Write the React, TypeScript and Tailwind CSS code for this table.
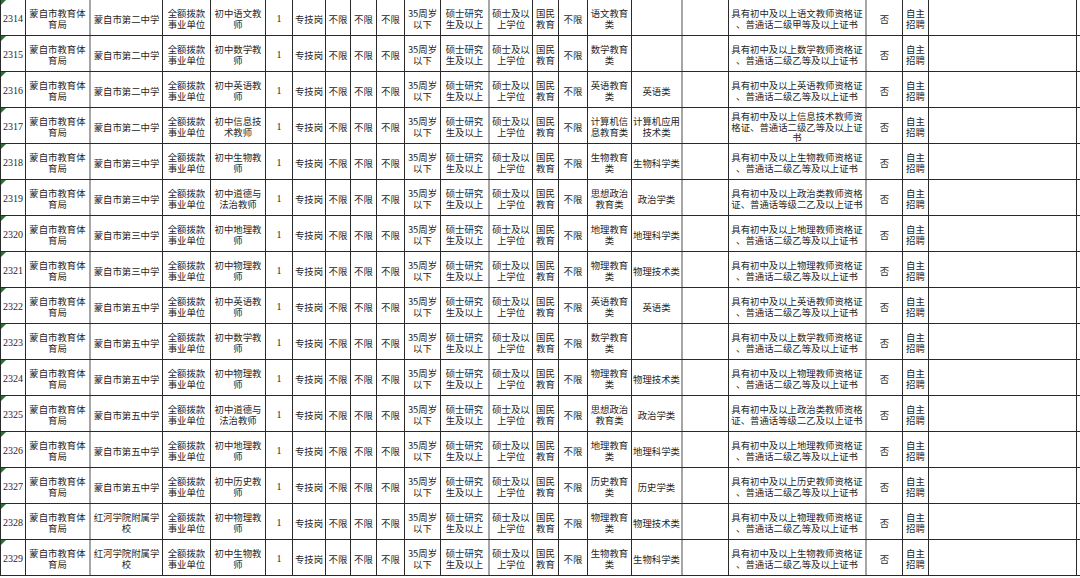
import * as React from "react"

type Row = {
  id: string
  school: string
  post: string
  major: string
  major2: string
  cert: string
}

const schoolOf = (n: number) =>
  n === 2 ? "蒙自市第二中学" : n === 3 ? "蒙自市第三中学" : n === 5 ? "蒙自市第五中学" : "红河学院附属学\n校"

const cert = (subject: string, level = "二级乙等") =>
  `具有初中及以上${subject}教师资格证\n、普通话${level}及以上证书`

const rows: Row[] = [
  { id: "2314", school: schoolOf(2), post: "初中语文教\n师", major: "语文教育\n类", major2: "", cert: cert("语文", "二级甲等") },
  { id: "2315", school: schoolOf(2), post: "初中数学教\n师", major: "数学教育\n类", major2: "", cert: cert("数学") },
  { id: "2316", school: schoolOf(2), post: "初中英语教\n师", major: "英语教育\n类", major2: "英语类", cert: cert("英语") },
  {
    id: "2317",
    school: schoolOf(2),
    post: "初中信息技\n术教师",
    major: "计算机信\n息教育类",
    major2: "计算机应用\n技术类",
    cert: "具有初中及以上信息技术教师资\n格证、普通话二级乙等及以上证\n书",
  },
  { id: "2318", school: schoolOf(3), post: "初中生物教\n师", major: "生物教育\n类", major2: "生物科学类", cert: cert("生物") },
  {
    id: "2319",
    school: schoolOf(3),
    post: "初中道德与\n法治教师",
    major: "思想政治\n教育类",
    major2: "政治学类",
    cert: "具有初中及以上政治类教师资格\n证、普通话等级二乙及以上证书",
  },
  { id: "2320", school: schoolOf(3), post: "初中地理教\n师", major: "地理教育\n类", major2: "地理科学类", cert: cert("地理") },
  { id: "2321", school: schoolOf(3), post: "初中物理教\n师", major: "物理教育\n类", major2: "物理技术类", cert: cert("物理") },
  { id: "2322", school: schoolOf(5), post: "初中英语教\n师", major: "英语教育\n类", major2: "英语类", cert: cert("英语") },
  { id: "2323", school: schoolOf(5), post: "初中数学教\n师", major: "数学教育\n类", major2: "", cert: cert("数学") },
  { id: "2324", school: schoolOf(5), post: "初中物理教\n师", major: "物理教育\n类", major2: "物理技术类", cert: cert("物理") },
  {
    id: "2325",
    school: schoolOf(5),
    post: "初中道德与\n法治教师",
    major: "思想政治\n教育类",
    major2: "政治学类",
    cert: "具有初中及以上政治类教师资格\n证、普通话等级二乙及以上证书",
  },
  { id: "2326", school: schoolOf(5), post: "初中地理教\n师", major: "地理教育\n类", major2: "地理科学类", cert: cert("地理") },
  { id: "2327", school: schoolOf(5), post: "初中历史教\n师", major: "历史教育\n类", major2: "历史学类", cert: cert("历史") },
  { id: "2328", school: schoolOf(0), post: "初中物理教\n师", major: "物理教育\n类", major2: "物理技术类", cert: cert("物理") },
  { id: "2329", school: schoolOf(0), post: "初中生物教\n师", major: "生物教育\n类", major2: "生物科学类", cert: cert("生物") },
]

// right edge of these columns is the thick grey rule
const greyRight = new Set([1, 11, 16, 18])

function Cell({ i, children }: { i: number; children?: React.ReactNode }) {
  const line = greyRight.has(i) ? "border-r-2 border-r-[#a6a6a6]" : "border-r border-r-[#2a2a2a]"
  return (
    <div className={`${line} flex items-center justify-center pt-[3px] text-center whitespace-pre`}>
      {children}
    </div>
  )
}

function TableRow({ r }: { r: Row }) {
  const cells = [
    "蒙自市教育体\n育局",
    r.school,
    "全额拨款\n事业单位",
    r.post,
    "1",
    "专技岗",
    "不限",
    "不限",
    "不限",
    "35周岁\n以下",
    "硕士研究\n生及以上",
    "硕士及以\n上学位",
    "国民\n教育",
    "不限",
    r.major,
    r.major2,
    "",
    r.cert,
    "否",
    "自主\n招聘",
    "",
  ]

  return (
    <div className="grid h-[36px] grid-cols-[26px_65px_72px_48px_55px_27px_33px_25px_26px_28px_36px_49px_43px_26px_29px_44px_51px_46px_138px_36px_26px_148px] border-b border-b-[#2a2a2a]">
      <div className="relative flex items-center border-l border-r border-l-[#2a2a2a] border-r-[#2a2a2a] pl-[2px] pt-[4px] font-['Liberation_Serif',serif] text-[10px]">
        <span className="absolute left-0 top-0 h-0 w-0 border-r-[5px] border-t-[5px] border-r-transparent border-t-[#1f7a2a]" />
        {r.id}
      </div>
      {cells.map((c, idx) => (
        <Cell key={idx} i={idx + 1}>
          {idx === 4 ? <span className="font-['Liberation_Serif',serif] text-[10px]">{c}</span> : c}
        </Cell>
      ))}
    </div>
  )
}

export default function App() {
  return (
    <div className="h-[578px] w-[1080px] overflow-hidden bg-white font-['Noto_Sans_CJK_SC','Noto_Sans',sans-serif] text-[9.4px] leading-[10.6px] text-[#262626]">
      {rows.map((r) => (
        <TableRow key={r.id} r={r} />
      ))}
    </div>
  )
}
